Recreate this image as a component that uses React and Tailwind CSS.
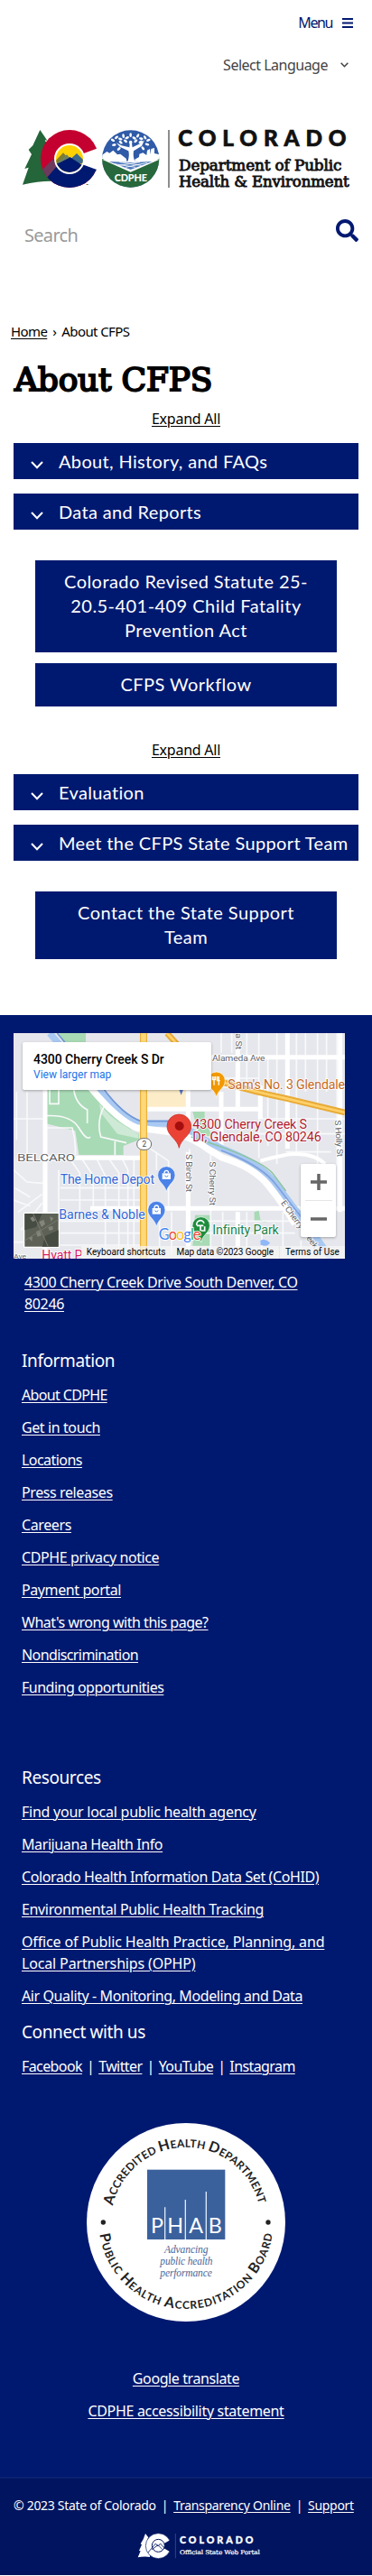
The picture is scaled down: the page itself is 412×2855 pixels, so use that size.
import React from "react";
import { FaSearch } from "react-icons/fa";

const slab = "'DejaVu Serif', serif";
const lato = "Lato, sans-serif";
const roboto = "Roboto, sans-serif";

function AgencyLogo() {
  return (
    <svg className="ml-[25px] block h-16 w-[363px] overflow-visible" viewBox="75 432 1089 192" role="img" aria-label="Colorado Department of Public Health & Environment">
      <defs>
        <clipPath id="c-outer"><circle cx="231" cy="528" r="96" /></clipPath>
        <clipPath id="c-inner"><circle cx="231" cy="528" r="45" /></clipPath>
        <clipPath id="badge"><circle cx="434" cy="528" r="95" /></clipPath>
      </defs>
      <path d="M133 432 157 467 149 466 170 503 161 502 176 545 190 603 Q135 600 75 614 L95 557 82 561 105 513 95 498 97 496 109 484Z" fill="#24653a" />
      <circle cx="231" cy="528" r="96" fill="#c3002f" />
      <g clipPath="url(#c-outer)">
        <path d="M130 610 V585 L152 592 L190 548 L330 540 V640 H150Z" fill="#001970" />
        <path d="M130 575 L175 530 L192 549 L155 592 L130 600Z" fill="#6d3a5d" />
      </g>
      <path d="M272 512 319 495 H332 V563 H319 L272 546Z" fill="#fff" />
      <circle cx="231" cy="528" r="51" fill="#fff" />
      <g clipPath="url(#c-inner)">
        <rect x="180" y="478" width="105" height="105" fill="#ffd100" />
        <path d="M175 545 210 508 245 545Z" fill="#7b7c36" />
        <path d="M222 540 255 510 290 545Z" fill="#3a6a8e" />
        <path d="M165 580 V555 L232 522 290 560 V585Z" fill="#001970" />
        <path d="M180 548 200 540 231 524 222 514 205 530Z" fill="#6d8260" />
      </g>
      <text x="286" y="621" fontFamily={roboto} fontWeight="700" fontSize="12">™</text>

      <g clipPath="url(#badge)">
        <rect x="339" y="432" width="191" height="192" fill="#2f5ba8" />
        <path d="M339 516 355 504 364 509 376 500 390 514 400 512 420 528 V548 H339Z" fill="#fff" />
        <path d="M448 530 462 522 463 512 475 508 487 516 489 500 498 495 500 514 502 495 513 492 V510 L530 514 V548 H448Z" fill="#fff" />
        <path d="M339 528 434 562 530 528 V640 H339Z" fill="#27693c" />
        <path d="M339 530 434 536 530 530 434 572Z" fill="#fff" />
        <path d="M362 537 434 540 506 537 434 564Z" fill="#4d78bb" />
        <path d="M380 545 450 556 M397 539 470 550 M490 541 417 556 M465 539 397 550" stroke="#fff" strokeWidth="2.5" />
      </g>
      <path d="M424 539 Q431 517 427 502 L398 488 387 475 404 484 430 490 431 477 H438 L440 490 465 478 480 466 471 485 444 502 Q441 522 449 539Z" fill="#fff" />
      <circle cx="434" cy="473" r="5.5" fill="#fff" />
      <g fill="#fff">
        {[[375, 466, 30], [387, 457, -40], [400, 462, 20], [410, 452, 80], [422, 458, -20], [434, 449, 90], [446, 459, 30], [458, 451, -60], [469, 461, 10], [482, 457, 60], [493, 466, -20], [379, 482, -10], [395, 495, -40], [401, 473, 40], [489, 480, 10], [475, 493, 50], [467, 472, -30], [417, 469, 40], [451, 469, -40]].map(([x, y, r], i) => (
          <ellipse key={i} cx={x} cy={y} rx="7" ry="4" transform={`rotate(${r} ${x} ${y})`} />
        ))}
      </g>
      <text x="380" y="603" textLength="109" lengthAdjust="spacingAndGlyphs" fontFamily={lato} fontWeight="900" fontSize="31" fill="#fff">CDPHE</text>
      <path d="M561 432 V624" stroke="#555" strokeWidth="4" />
      <text x="592" y="486" textLength="558" fontFamily={lato} fontWeight="900" fontSize="73" fill="#111" stroke="#111" strokeWidth="2">COLORADO</text>
      <g fontFamily={slab} fontSize="48" fill="#111" stroke="#111" strokeWidth="2.5">
        <text x="594" y="568" textLength="541" lengthAdjust="spacingAndGlyphs">Department of Public</text>
        <text x="594" y="622" textLength="566" lengthAdjust="spacingAndGlyphs">Health &amp; Environment</text>
      </g>
    </svg>
  );
}

function AccordionBar({ children }) {
  return (
    <button className="flex h-10 w-[382px] items-center bg-[#001970] pl-[19px] text-left font-[Lato,sans-serif] text-[20px] leading-10 tracking-[0.35px] whitespace-nowrap text-white">
      <svg className="mt-[9px] mr-[17px] h-[9px] w-[14px] shrink-0" viewBox="0 0 14 9" fill="none" stroke="white" strokeWidth="2">
        <path d="M1 1 7 7.2 13 1" />
      </svg>
      {children}
    </button>
  );
}

function ActionButton({ children }) {
  return (
    <a className="block w-[334px] bg-[#001970] pt-[10px] pb-[11px] text-center font-[Lato,sans-serif] text-[20px] leading-[27px] tracking-[0.45px] text-white">
      {children}
    </a>
  );
}

function PoiPin({ x, y, color, children }) {
  return (
    <g transform={`translate(${x} ${y})`}>
      <path d="M0 56 C-5 30 -29 24 -29 0 A29 29 0 0 1 29 0 C29 24 5 30 0 56Z" fill={color} stroke="#fff" strokeWidth="2" />
      {children}
    </g>
  );
}

function ShoppingBag() {
  return (
    <g>
      <path d="M-14 -6 H14 V14 H-14Z" fill="#fff" />
      <path d="M-7 -6 A7 9 0 0 1 7 -6" fill="none" stroke="#fff" strokeWidth="4" />
      <path d="M-6 2 Q0 10 6 2" fill="none" stroke="#4a82e8" strokeWidth="3" />
    </g>
  );
}

function MapLabel({ x, y, w, size = 42, fill, rotate = 0, halo = "#fff", weight = 400, children }) {
  return (
    <text x={x} y={y} textLength={w} lengthAdjust="spacingAndGlyphs" transform={`rotate(${rotate} ${x} ${y})`} fontFamily={roboto} fontWeight={weight} fontSize={size} fill={fill} stroke={halo} strokeWidth="5" strokeLinejoin="round" paintOrder="stroke">
      {children}
    </text>
  );
}

function StreetMap() {
  return (
    <div className="relative ml-[15px] h-[250px] w-[367px] overflow-hidden bg-[#e8eaed]">
      <svg className="block h-full w-full" viewBox="45 45 1101 750">
        <rect x="45" y="45" width="1101" height="750" fill="#e6e7ec" />
        <path d="M45 460 H150 V795 H45Z" fill="#e9eaee" />
        <path d="M195 45 H285 V80 H215Z M150 230 H310 L440 370 462 380 V400 L410 420 V450 H300 L262 450 250 370 150 345Z" fill="#a8dab5" />
        <path d="M330 280 Q370 330 410 350 L460 382 V395 L390 380 335 310Z" fill="#ceead6" />
        <path d="M640 306 H680 V330 L705 390 660 380Z M648 650 H698 V752 H640Z M845 640 L860 635 865 665 890 675 845 670Z" fill="#a8dab5" />
        <path d="M488 230 H625 V300 H488Z" fill="#fdecc8" />
        <path d="M545 180 H625 V230 H545Z" fill="#fdecc8" />
        <g fill="none" stroke="#f8f9fa" strokeWidth="5">
          <path d="M150 320 Q235 315 262 360 T300 390 M165 230 V280 H195 V230 M245 230 Q250 280 290 300 V345 M150 360 H240 Q252 400 250 450 M345 290 Q320 340 335 390 L420 410 M382 400 V450 M195 500 V640 M230 460 L265 510 V640 M270 460 L310 520 V640 M320 460 L350 520 V780 M360 460 L395 510 V780 M405 460 L425 500 V780 M445 460 V780 M45 500 L90 540 150 545 M50 560 L100 590 M45 600 L100 620 M60 640 L140 580 M70 700 L140 610 M80 740 H45 M200 560 H465 M200 600 H465 M200 670 H465 M200 710 H465 M200 750 H465" />
          <path d="M500 430 L560 470 V620 M520 440 V500 M530 640 V780 M570 640 V780 M630 430 V795 M700 440 V795 M735 250 V410 M770 45 V110 M735 45 V110 M820 45 V230 M860 45 V460 M890 130 V420 M920 45 V480 M985 45 V440 M1015 45 V240 M1055 45 V480 M1085 45 V240 M1120 45 V620 M860 330 H1146 M860 380 H1146 M640 670 H980 M740 640 V790 M790 640 V790 M820 640 V790 M870 690 V790 M940 640 V790 M1000 735 V790 M640 710 H980 M950 440 H1100 M45 330 H150 M90 240 V450 M55 240 V400 M740 195 H860 M740 225 H850" />
        </g>
        <g fill="none" stroke="#fff" strokeWidth="15">
          <path d="M150 230 V795 M150 460 H470 M490 298 H865 M625 230 V360 M700 125 H1146 M790 100 V300 M735 240 V420 M865 220 V330 M955 45 V430 M1130 45 V640 M300 628 H1146 M625 440 V790 M790 640 V790" />
          <path d="M865 470 Q900 460 960 448 Q1040 440 1080 480" strokeWidth="12" />
        </g>
        <path d="M165 45 L320 225 Q400 320 460 345 H560 Q630 360 680 400 L740 430 Q870 480 920 550 T1020 680 L1100 795" fill="none" stroke="#a8c9f2" strokeWidth="22" />
        <path d="M190 45 L340 225 Q410 320 470 338 H560" fill="none" stroke="#6f96d6" strokeWidth="5" />
        <path d="M300 225 Q390 335 455 360 L560 373 Q630 385 690 430 L740 460 Q840 490 890 550 T980 680" fill="none" stroke="#fff" strokeWidth="22" />
        <path d="M735 435 Q870 485 918 550 T1020 680" fill="none" stroke="#7fa1dd" strokeWidth="5" />
        <path d="M635 390 Q860 460 905 510 L950 570" fill="none" stroke="#8ac49d" strokeWidth="4" />
        <path d="M477 45 V795" stroke="#e9b23e" strokeWidth="24" />
        <path d="M477 45 V795" stroke="#ffd878" strokeWidth="17" />
        <path d="M555 45 L600 95 M730 205 Q820 235 950 262 L1146 309" fill="none" stroke="#e8ab36" strokeWidth="20" />
        <path d="M555 45 L600 95 M730 205 Q820 235 950 262 L1146 309" fill="none" stroke="#ffd06a" strokeWidth="8" />
        <path d="M865 735 Q880 725 897 742 Q890 758 866 749Z" fill="#90b8f8" />
        <rect x="455" y="395" width="48" height="38" rx="19" fill="#fff" stroke="#6b6d72" strokeWidth="3" />
        <text x="479" y="423" textAnchor="middle" fontFamily={roboto} fontSize="25" fill="#444">2</text>
        <MapLabel x={705} y={137} w={175} size={29} fill="#5f6368">Alameda Ave</MapLabel>
        <MapLabel x={783} y={46} w={53} size={28} fill="#5f6368" rotate={90}>a St</MapLabel>
        <MapLabel x={57} y={472} w={192} size={35} fill="#5f6368">BELCARO</MapLabel>
        <MapLabel x={618} y={447} w={126} size={28} fill="#5f6368" rotate={90}>S Birch St</MapLabel>
        <MapLabel x={696} y={472} w={146} size={28} fill="#5f6368" rotate={90}>S Cherry St</MapLabel>
        <MapLabel x={1112} y={335} w={122} size={28} fill="#5f6368" rotate={86}>S Holly St</MapLabel>
        <MapLabel x={932} y={610} w={190} size={28} fill="#5f6368" rotate={54}>E Cherry Creek</MapLabel>
        <MapLabel x={45} y={796} w={42} size={24} fill="#5f6368">Ave</MapLabel>
        <PoiPin x={719} y={203} color="#f29900">
          <path d="M-8 -14 V0 M-13 -14 V-3 H-3 V-14 M-8 -2 V15 M8 -14 V15 M3 -14 V0 H12" fill="none" stroke="#fff" strokeWidth="4" />
        </PoiPin>
        <MapLabel x={757} y={231} w={389} fill="#c5691d">Sam's No. 3 Glendale</MapLabel>
        <path d="M594 230 L602 251 610 230Z" fill="#5277c5" />
        <path d="M595 427 C590 397 555 386 555 355 A40 40 0 0 1 635 355 C635 386 600 397 595 427Z" fill="#ea4335" stroke="#c5221f" strokeWidth="2" />
        <circle cx="596" cy="354" r="15" fill="#a50e0e" />
        <MapLabel x={640} y={363} w={380} fill="#b01c32">4300 Cherry Creek S</MapLabel>
        <MapLabel x={640} y={404} w={427} fill="#b01c32">Dr, Glendale, CO 80246</MapLabel>
        <MapLabel x={200} y={546} w={313} fill="#3367d6">The Home Depot</MapLabel>
        <PoiPin x={553} y={517} color="#4a82e8"><ShoppingBag /></PoiPin>
        <MapLabel x={196} y={663} w={286} fill="#3367d6">Barnes &amp; Noble</MapLabel>
        <PoiPin x={520} y={633} color="#4a82e8"><ShoppingBag /></PoiPin>
        <PoiPin x={668} y={685} color="#1e8e3e">
          <path d="M-2 17 V0 M-14 -1 A12 12 0 0 1 10 -8 M-14 0 H8 M0 17 H12 V3" fill="none" stroke="#fff" strokeWidth="5" />
        </PoiPin>
        <MapLabel x={706} y={715} w={220} fill="#21834b">Infinity Park</MapLabel>
        <text x="527" y="733" textLength="140" fontFamily={lato} fontSize="49" stroke="#fff" strokeWidth="5" paintOrder="stroke">
          <tspan fill="#4285f4">G</tspan><tspan fill="#ea4335">o</tspan><tspan fill="#fbbc04">o</tspan><tspan fill="#4285f4">g</tspan><tspan fill="#34a853">l</tspan><tspan fill="#ea4335">e</tspan>
        </text>
        <MapLabel x={139} y={798} w={135} fill="#d81b60">Hyatt P</MapLabel>
        <g>
          <rect x="78" y="641" width="120" height="118" rx="4" fill="#fff" />
          <rect x="82" y="645" width="112" height="110" fill="#5d6156" />
          <path d="M82 645 H140 L120 690 82 700Z M150 720 L194 700 V755 H140Z" fill="#474c43" />
          <path d="M100 660 110 655 118 668 108 672Z M130 672 145 665 150 680 138 690Z M165 655 178 660 170 672Z M120 705 132 700 138 718 124 722Z M95 725 108 722 106 738Z M160 690 175 686 176 698 164 702Z" fill="#84857a" />
          <path d="M82 735 194 665 M110 645 160 755" stroke="#777b6e" strokeWidth="3" />
        </g>
      </svg>
      <div className="absolute top-[10px] left-[10px] h-[53px] w-[209px] rounded-[2px] bg-white pt-[10px] pl-[12px] font-[Roboto,sans-serif] shadow-[0_1px_3px_rgba(0,0,0,0.3)]">
        <div className="text-[14px] leading-[18px] font-medium tracking-[-0.05px] whitespace-nowrap text-black">4300 Cherry Creek S Dr</div>
        <a className="block text-[12px] leading-[17px] tracking-normal text-[#1a73e8]">View larger map</a>
      </div>
      <div className="absolute top-[145px] right-[10px] flex h-[81px] w-[39px] flex-col items-center rounded-[2px] bg-white shadow-[0_1px_3px_rgba(0,0,0,0.3)]">
        <svg className="h-10 w-[18px]" viewBox="0 0 18 40" stroke="#666" strokeWidth="3.5"><path d="M0 20 H18 M9 11 V29" /></svg>
        <div className="h-px w-[30px] bg-[#e6e6e6]" />
        <svg className="h-10 w-[18px]" viewBox="0 0 18 40" stroke="#666" strokeWidth="3.5"><path d="M0 20 H18" /></svg>
      </div>
      <div className="absolute right-0 bottom-0 flex h-[14px] items-center font-[Roboto,sans-serif] text-[10px] leading-[14px] whitespace-nowrap text-black">
        <span className="bg-[#f5f5f5]/75 px-[6px] tracking-[0.05px]">Keyboard shortcuts</span>
        <span className="bg-[#f5f5f5]/75 px-[6px] tracking-[-0.07px]">Map data ©2023 Google</span>
        <span className="ml-px bg-[#f5f5f5]/75 px-[6px] tracking-[0.07px]">Terms of Use</span>
      </div>
    </div>
  );
}

function AccreditationSeal() {
  return (
    <svg className="mx-auto block h-[220px] w-[220px]" viewBox="48 70 660 660" role="img" aria-label="Accredited Health Department">
      <defs>
        <path id="arc-top" d="M135 345 A249 249 0 0 1 621 345" />
        <path id="arc-bottom" d="M91 440 A290 290 0 0 0 665 440" />
      </defs>
      <circle cx="378" cy="400" r="330" fill="#fff" />
      <g fontFamily={lato} fontWeight="700" fontSize="36" fill="#222">
        <text textLength="665"><textPath href="#arc-top"><tspan fontSize="48">A</tspan>CCREDITED <tspan fontSize="48">H</tspan>EALTH <tspan fontSize="48">D</tspan>EPARTMENT</textPath></text>
        <text textLength="828"><textPath href="#arc-bottom"><tspan fontSize="48">P</tspan>UBLIC <tspan fontSize="48">H</tspan>EALTH <tspan fontSize="48">A</tspan>CCREDITATION <tspan fontSize="48">B</tspan>OARD</textPath></text>
      </g>
      <circle cx="103" cy="400" r="8" fill="#222" />
      <circle cx="651" cy="400" r="8" fill="#222" />
      <rect x="249" y="225" width="259" height="232" fill="#3b619d" />
      <path d="M308 350 V457 M376 325 V457 M445 298 V457" stroke="#dce8fa" strokeWidth="4" />
      <g fontFamily={lato} fontSize="70" fill="#fff" textAnchor="middle">
        <text x="282" y="436">P</text><text x="342" y="436">H</text><text x="411" y="436">A</text><text x="475" y="436">B</text>
      </g>
      <g fontFamily="'Liberation Serif', serif" fontStyle="italic" fontSize="35" fill="#4c6698">
        <text x="306" y="503" textLength="145" lengthAdjust="spacingAndGlyphs">Advancing</text>
        <text x="292" y="542" textLength="174" lengthAdjust="spacingAndGlyphs">public health</text>
        <text x="292" y="581" textLength="172" lengthAdjust="spacingAndGlyphs">performance</text>
      </g>
    </svg>
  );
}

function PortalLogo() {
  return (
    <svg className="ml-[152px] block h-[30px] w-[137px]" viewBox="456 624 411 90" role="img" aria-label="Colorado Official State Web Portal">
      <path d="M483 627 493 640 490 645 498 665 V705 Q480 702 458 706 L467 685 462 684 471 664 467 661 476 646Z" fill="#fff" />
      <circle cx="526" cy="668" r="42" fill="#fff" stroke="#00145f" strokeWidth="2" />
      <path d="M545 660 566 648 H570 V688 H565 L545 676Z" fill="#00145f" />
      <circle cx="526" cy="667" r="21" fill="#fff" stroke="#00145f" strokeWidth="3" />
      <path d="M492 690 517 660 525 669 533 660 545 674 M505 680 525 665 540 680" fill="none" stroke="#00145f" strokeWidth="2.5" />
      <path d="M583 627 V709" stroke="#4c5e97" strokeWidth="2" />
      <text x="597" y="660" textLength="244" fontFamily={lato} fontWeight="900" fontSize="32" fill="#fff" stroke="#fff">COLORADO</text>
      <text x="597" y="696" textLength="266" lengthAdjust="spacingAndGlyphs" fontFamily={slab} fontSize="20" fill="#fff" stroke="#fff" strokeWidth="0.6">Official State Web Portal</text>
    </svg>
  );
}

const link = "underline decoration-1 underline-offset-2";

const information = [
  { label: "About CDPHE", tracking: "tracking-[-0.65px]" },
  { label: "Get in touch" },
  { label: "Locations", tracking: "tracking-[-0.55px]" },
  { label: "Press releases" },
  { label: "Careers" },
  { label: "CDPHE privacy notice" },
  { label: "Payment portal" },
  { label: "What's wrong with this page?", tracking: "tracking-[-0.48px]" },
  { label: "Nondiscrimination", tracking: "tracking-[-0.6px]" },
  { label: "Funding opportunities", tracking: "tracking-[-0.5px]" },
];

const resources = [
  { label: "Find your local public health agency", tracking: "tracking-[-0.25px]" },
  { label: "Marijuana Health Info" },
  { label: "Colorado Health Information Data Set (CoHID)" },
  { label: "Environmental Public Health Tracking", tracking: "tracking-[-0.35px]" },
  { label: "Office of Public Health Practice, Planning, and Local Partnerships (OPHP)", tracking: "tracking-[-0.15px]" },
  { label: "Air Quality - Monitoring, Modeling and Data" },
];

const social = ["Facebook", "Twitter", "YouTube", "Instagram"];

function LinkList({ items }) {
  return (
    <ul className="flex w-[345px] flex-col gap-3">
      {items.map(({ label, tracking = "" }) => (
        <li key={label}><a className={`${link} ${tracking}`}>{label}</a></li>
      ))}
    </ul>
  );
}

export default function App() {
  return (
    <div className="flex h-[2855px] w-[412px] flex-col overflow-hidden bg-white pb-px font-['Noto_Sans',sans-serif] text-[16px] leading-6 tracking-[-0.4px] text-black">
      <header className="flex h-[355px] shrink-0 flex-col pt-[13px]">
        <button className="mr-[21px] flex items-center gap-[11px] self-end tracking-[-1.4px] text-[#001970]">
          Menu
          <svg className="h-[12px] w-[12px]" viewBox="0 0 12 12" stroke="currentColor" strokeWidth="2"><path d="M0 2 H12 M0 6.5 H12 M0 11 H12" /></svg>
        </button>
        <button className="mt-[23px] mr-[26px] flex items-center gap-[14px] self-end tracking-[-0.5px] text-[#444]">
          Select Language
          <svg className="h-[6px] w-[9px]" viewBox="0 0 9 6" fill="none" stroke="#444" strokeWidth="1.6"><path d="M.7 .8 4.5 4.7 8.3 .8" /></svg>
        </button>
        <div className="mt-[60px]"><AgencyLogo /></div>
        <div className="mt-[35px] flex items-start justify-between pr-[15px] pl-[27px]">
          <span className="pt-1 text-[20px] leading-7 tracking-[-0.7px] text-[#999]">Search</span>
          <FaSearch className="h-[25px] w-[25px] text-[#001970]" />
        </div>
      </header>

      <main className="flex h-[770px] shrink-0 flex-col">
        <nav className="flex gap-[6px] pl-[12px] text-[15px] tracking-[-0.6px]">
          <a className={link}>Home</a>
          <span>›</span>
          <span>About CFPS</span>
        </nav>
        <h1 className="mt-5 pl-[16px] font-['DejaVu_Serif',serif] text-[36px] leading-[44px] font-normal tracking-[-0.2px] [-webkit-text-stroke:2px_black]">About CFPS</h1>
        <a className={`mt-[9px] self-center tracking-[-0.25px] ${link}`}>Expand All</a>
        <div className="mt-[15px] flex flex-col gap-4 pl-[15px]">
          <AccordionBar>About, History, and FAQs</AccordionBar>
          <AccordionBar>Data and Reports</AccordionBar>
        </div>
        <div className="mt-[34px] flex flex-col items-center gap-3">
          <ActionButton>Colorado Revised Statute 25-<br />20.5-401-409 Child Fatality<br />Prevention Act</ActionButton>
          <ActionButton>CFPS Workflow</ActionButton>
        </div>
        <a className={`mt-[36px] self-center tracking-[-0.25px] ${link}`}>Expand All</a>
        <div className="mt-[15px] flex flex-col gap-4 pl-[15px]">
          <AccordionBar>Evaluation</AccordionBar>
          <AccordionBar>Meet the CFPS State Support Team</AccordionBar>
        </div>
        <div className="mt-[34px] flex justify-center">
          <ActionButton>Contact the State Support<br />Team</ActionButton>
        </div>
      </main>

      <footer className="flex h-[1729px] shrink-0 flex-col bg-[#001970] text-white">
        <div className="h-[1622px] border-b-2 border-[#0b2270] pt-5">
          <StreetMap />
          <a className={`mt-[14px] ml-[27px] block w-[320px] tracking-[-0.36px] ${link}`}>4300 Cherry Creek Drive South Denver, CO<br />80246</a>
          <div className="mt-[37px] pl-6">
            <h2 className="mb-3 text-[19px] leading-7">Information</h2>
            <LinkList items={information} />
            <h2 className="mt-[74px] mb-3 text-[19px] leading-7">Resources</h2>
            <LinkList items={resources} />
            <h2 className="mt-[14px] mb-3 text-[19px] leading-7">Connect with us</h2>
            <p className="flex gap-[5px] tracking-[-0.6px]">
              {social.map((name, i) => (
                <React.Fragment key={name}>
                  {i > 0 && <span>|</span>}
                  <a className={link}>{name}</a>
                </React.Fragment>
              ))}
            </p>
          </div>
          <div className="mt-[51px]"><AccreditationSeal /></div>
          <div className="mt-[51px] flex flex-col items-center gap-3">
            <a className={link}>Google translate</a>
            <a className={`tracking-[-0.32px] ${link}`}>CDPHE accessibility statement</a>
          </div>
        </div>
        <div className="flex-1 bg-[#00145f] pt-[18px]">
          <p className="flex gap-[6px] pl-[15px] text-[14px] tracking-[-0.3px] whitespace-nowrap">
            <span>© 2023 State of Colorado</span>
            <span>|</span>
            <a className={link}>Transparency Online</a>
            <span>|</span>
            <a className={link}>Support</a>
          </p>
          <div className="mt-[18px]"><PortalLogo /></div>
        </div>
      </footer>
    </div>
  );
}
